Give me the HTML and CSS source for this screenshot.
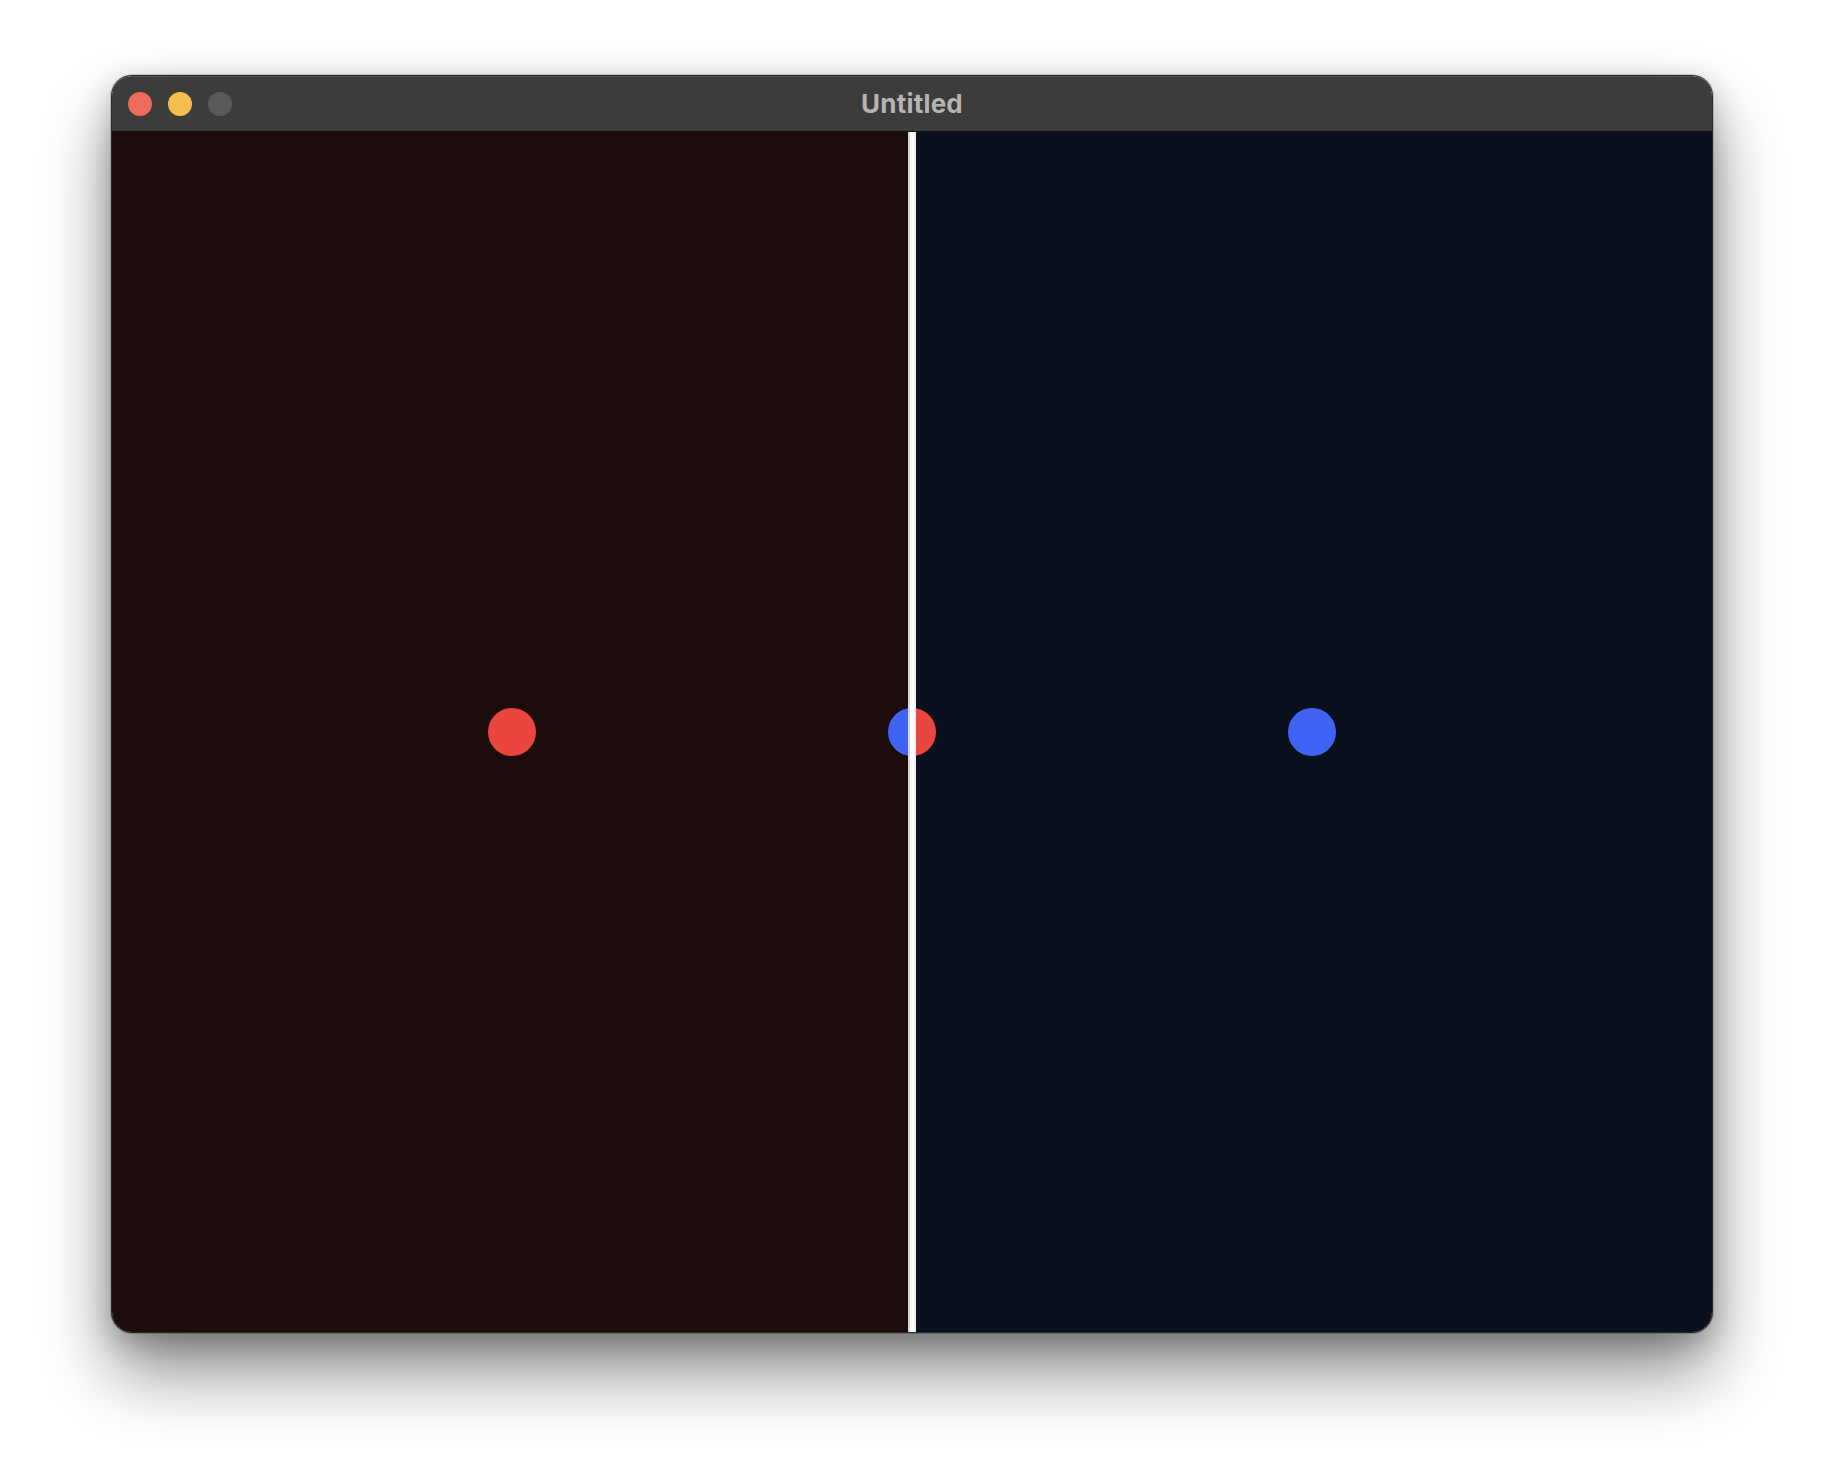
FILE: index.html
```html
<!DOCTYPE html>
<html>
<head>
<meta charset="utf-8">
<title>Untitled</title>
<link rel="stylesheet" href="styles.css">
</head>
<body>
<div class="window">
  <div class="titlebar">
    <div class="lights">
      <span class="light close"></span>
      <span class="light min"></span>
      <span class="light max"></span>
    </div>
    <div class="title">Untitled</div>
  </div>
  <div class="canvas">
    <div class="half left"><span class="dot red"></span></div>
    <div class="half right"><span class="dot blue"></span></div>
    <div class="center-dot"><span class="cd-left"></span><span class="cd-right"></span></div>
    <div class="divider"></div>
  </div>
</div>
</body>
</html>
```
FILE: styles.css
```css
html, body {
  margin: 0;
  padding: 0;
  background: #ffffff;
}
body {
  width: 1824px;
  height: 1480px;
  overflow: hidden;
  font-family: "Inter", "Liberation Sans", sans-serif;
}
.window {
  margin: 76px 0 0 112px;
  width: 1600px;
  height: 1256px;
  border-radius: 20px;
  overflow: hidden;
  display: flex;
  flex-direction: column;
  box-shadow: 0 0 0 1px #2a2a2a, 0 0 0 2px rgba(0,0,0,0.15), 0 40px 70px rgba(0,0,0,0.45), 0 10px 30px rgba(0,0,0,0.25);
}
.titlebar {
  position: relative;
  height: 56px;
  box-sizing: border-box;
  background: #3c3c3a;
  border-bottom: 1px solid #0e0e0e;
  box-shadow: inset 0 1px 0 rgba(255,255,255,0.12);
  display: flex;
  align-items: center;
  justify-content: center;
  flex-shrink: 0;
}
.lights {
  position: absolute;
  left: 16px;
  top: 16px;
  display: flex;
  gap: 16px;
}
.light {
  width: 24px;
  height: 24px;
  border-radius: 50%;
  display: block;
}
.close { background: #ed6a5e; }
.min { background: #f4bf4f; }
.max { background: #5a5a58; }
.title {
  color: #b4b4b2;
  font-weight: 700;
  font-size: 26px;
  letter-spacing: 0.2px;
  margin-top: -1px;
}
.canvas {
  position: relative;
  flex: 1;
  display: grid;
  grid-template-columns: 1fr 1fr;
}
.half {
  display: flex;
  align-items: center;
  justify-content: center;
}
.left { background: #1c0c0c; }
.right { background: #0a101e; }
.dot {
  width: 48px;
  height: 48px;
  border-radius: 50%;
  display: block;
}
.red { background: #e9463f; }
.blue { background: #4163f4; }
.center-dot {
  position: absolute;
  left: 776px;
  top: 576px;
  width: 48px;
  height: 48px;
  border-radius: 50%;
  overflow: hidden;
  display: flex;
}
.cd-left { flex: 1; background: #4163f4; }
.cd-right { flex: 1; background: #e9463f; }
.divider {
  position: absolute;
  left: 796px;
  top: 0;
  bottom: 0;
  width: 8px;
  background: linear-gradient(to right, #d8d8d8 0, #d8d8d8 2px, #ffffff 2px, #ffffff 6px, #f0f0f0 6px);
}
```
